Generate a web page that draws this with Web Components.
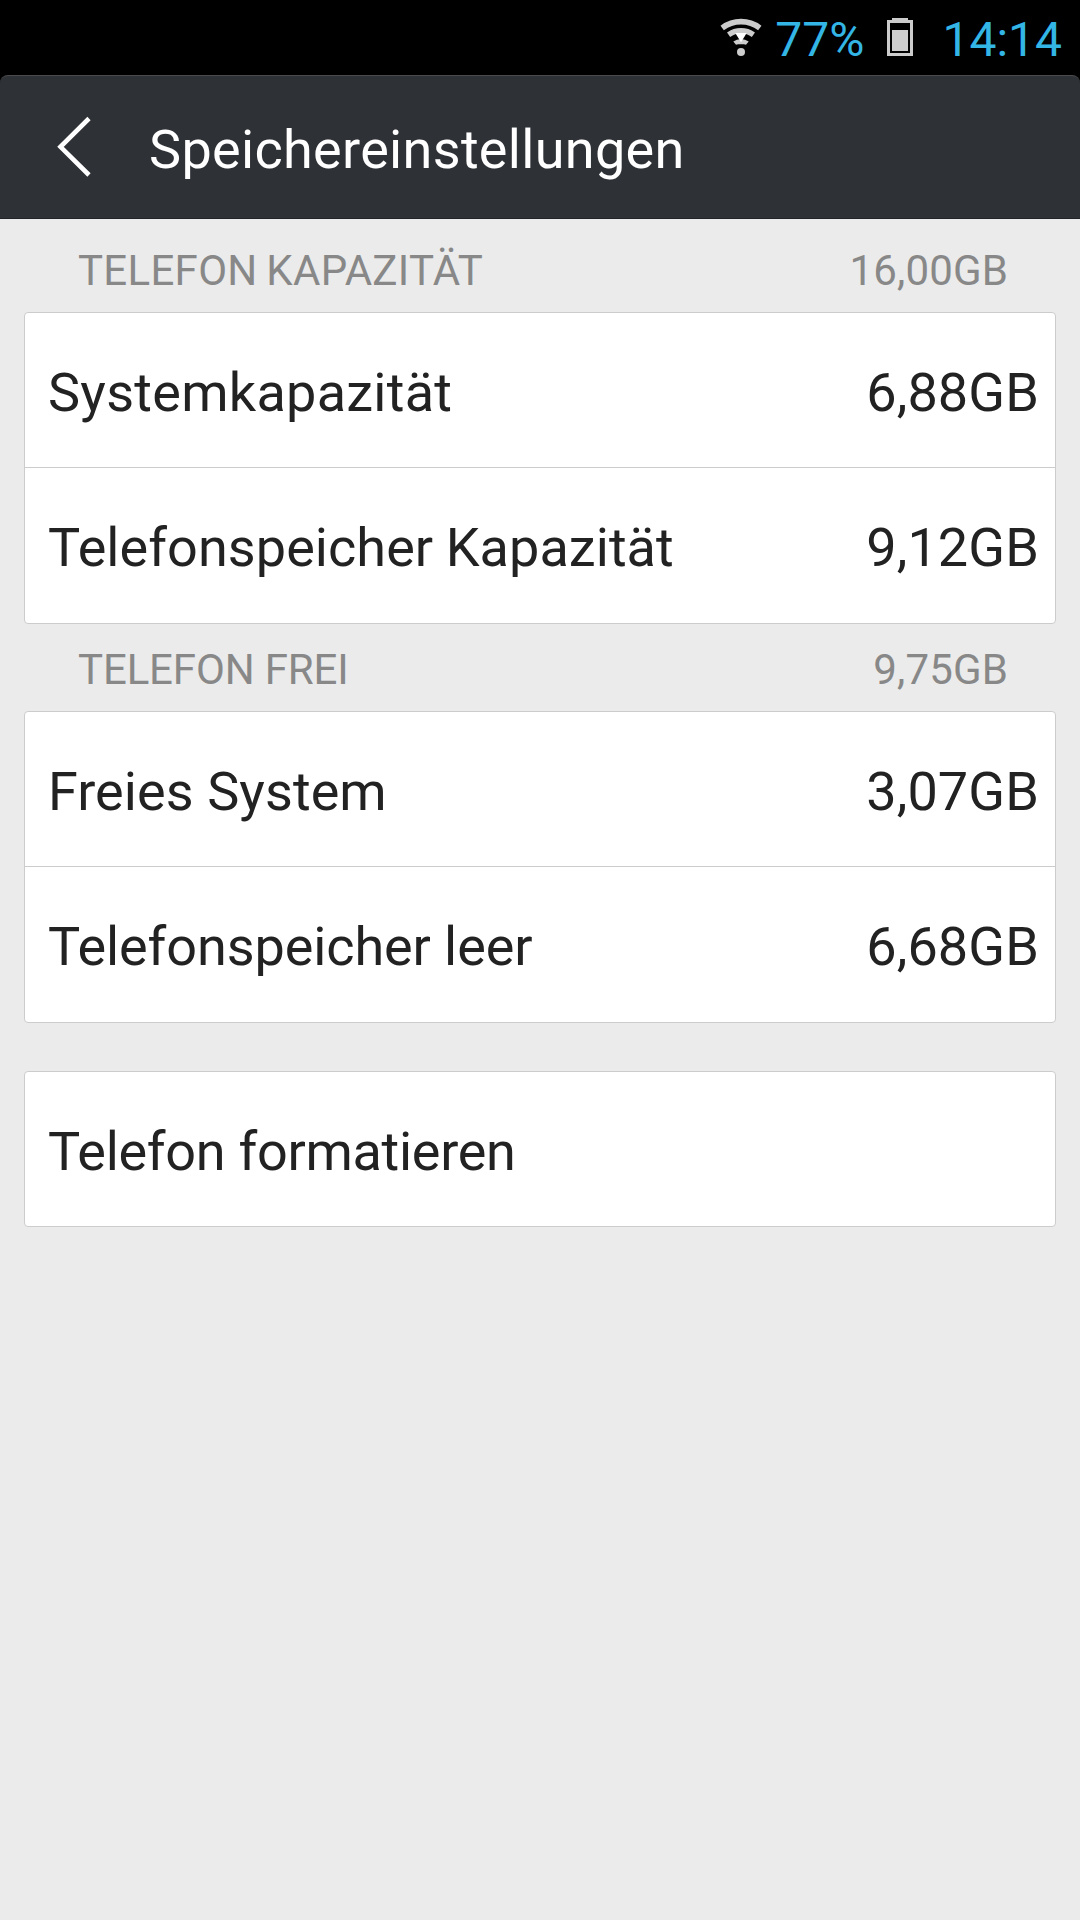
<!DOCTYPE html>
<html lang="de">
<head>
<meta charset="utf-8">
<title>Speichereinstellungen</title>
<style>
  body {
    margin: 0;
    background: #ebebeb;
    font-family: Roboto, "Noto Sans", sans-serif;
    color: #222;
  }
</style>
</head>
<body>
<storage-screen></storage-screen>

<script>
class StatusBar extends HTMLElement {
  constructor() {
    super();
    this.attachShadow({ mode: 'open' });
    this.shadowRoot.innerHTML = `
      <style>
        :host {
          display: flex;
          justify-content: flex-end;
          height: 75px;
          box-sizing: border-box;
          padding: 12px 18px 0 0;
          background: #000;
          color: #33b5e5;
          font-size: 48px;
          line-height: 56px;
        }
        svg { display: block; flex: none; margin-top: 4px; }
        .wifi { margin-right: 12px; }
        .battery { margin: 4px 29px 0 23px; }
      </style>
      <svg class="wifi" width="44" height="42" viewBox="0 0 44 42" fill="none" stroke="#ccc">
        <path d="M3.2 11.9A31.3 31.3 0 0 1 40.8 11.9" stroke-width="5.6"/>
        <path d="M9.6 18.7A21.3 21.3 0 0 1 34.4 18.7" stroke-width="5.4"/>
        <path d="M14.3 25.5A13 13 0 0 1 29.7 25.5L27 28.8L25 28.2H19L17 28.8Z" fill="#ccc" stroke="none"/>
        <circle cx="22" cy="36" r="4" fill="#ccc" stroke="none"/>
        <path d="M16.3 17H27.7L22 26.3Z" fill="#fff" stroke="none"/>
      </svg>
      <span><slot name="level"></slot></span>
      <svg class="battery" width="26" height="40" viewBox="0 0 26 40">
        <path d="M5 2H21V5H5Z" fill="#ccc"/>
        <rect x="1.5" y="5.5" width="23" height="33" fill="none" stroke="#ccc" stroke-width="3"/>
        <path d="M5 14H21V35H5Z" fill="#ccc"/>
      </svg>
      <span><slot name="time"></slot></span>
    `;
  }
}

class TitleBar extends HTMLElement {
  constructor() {
    super();
    this.attachShadow({ mode: 'open' });
    this.shadowRoot.innerHTML = `
      <style>
        :host { display: block; background: #000; }
        header {
          display: flex;
          align-items: center;
          height: 144px;
          box-sizing: border-box;
          padding-left: 54px;
          background: #2e3136;
          border-top: 1px solid #4b4b4d;
          border-bottom: 1px solid #222528;
          border-radius: 8px 8px 0 0;
        }
        svg { display: block; margin-right: 55px; }
        h1 {
          margin: 0;
          padding-top: 5px;
          color: #fff;
          font-size: 54px;
          font-weight: 400;
          line-height: 64px;
          letter-spacing: 0.32px;
        }
      </style>
      <header>
        <svg width="40" height="64" viewBox="0 0 40 64" fill="none" stroke="#fff" stroke-width="4.6">
          <path d="M35 3.5L6.5 31.8L35 60"/>
        </svg>
        <h1><slot></slot></h1>
      </header>
    `;
  }
}

// label + total above a card
class SectionHeader extends HTMLElement {
  constructor() {
    super();
    this.attachShadow({ mode: 'open' });
    this.shadowRoot.innerHTML = `
      <style>
        :host {
          display: flex;
          justify-content: space-between;
          align-items: flex-end;
          height: var(--section-height, 87px);
          box-sizing: border-box;
          padding: 0 48px 16px 54px;
          color: #888;
          font-size: 42px;
          line-height: 50px;
        }
        .label {
          letter-spacing: var(--tracking, 0);
          word-spacing: var(--word-gap, 0);
        }
        .value { letter-spacing: 0.15px; }
      </style>
      <span class="label"><slot></slot></span>
      <span class="value"><slot name="value"></slot></span>
    `;
  }
}

class SettingsCard extends HTMLElement {
  constructor() {
    super();
    this.attachShadow({ mode: 'open' });
    this.shadowRoot.innerHTML = `
      <style>
        :host {
          display: block;
          box-sizing: border-box;
          background: #fff;
          border: 1px solid #ccc;
          border-radius: 4px;
        }
        ::slotted(settings-row:not(:first-child)) {
          --row-height: 156px;
          border-top: 1px solid #ccc;
        }
      </style>
      <slot></slot>
    `;
  }
}

class SettingsRow extends HTMLElement {
  constructor() {
    super();
    this.attachShadow({ mode: 'open' });
    this.shadowRoot.innerHTML = `
      <style>
        :host {
          display: flex;
          justify-content: space-between;
          align-items: center;
          height: var(--row-height, 154px);
          box-sizing: border-box;
          padding: 5px 16px 0 23px;
          font-size: 54px;
          line-height: 64px;
        }
        .label {
          letter-spacing: var(--tracking, 0);
          word-spacing: var(--word-gap, 0);
        }
        .value { letter-spacing: 0.12px; }
      </style>
      <span class="label"><slot></slot></span>
      <span class="value"><slot name="value"></slot></span>
    `;
  }
}

class StorageScreen extends HTMLElement {
  constructor() {
    super();
    this.attachShadow({ mode: 'open' });
    this.shadowRoot.innerHTML = `
      <style>
        :host { display: block; }
        main { display: flex; flex-direction: column; padding: 0 24px; }
        .first { --section-height: 93px; }
        .format { margin-top: 48px; }
      </style>
      <status-bar>
        <span slot="level">77%</span>
        <span slot="time">14:14</span>
      </status-bar>
      <title-bar>Speichereinstellungen</title-bar>
      <main>
        <section-header class="first" style="--tracking: 0.3px; --word-gap: -2px">TELEFON KAPAZITÄT<span slot="value">16,00GB</span></section-header>
        <settings-card>
          <settings-row style="--tracking: 0.27px">Systemkapazität<span slot="value">6,88GB</span></settings-row>
          <settings-row style="--tracking: 0.06px; --word-gap: -1px">Telefonspeicher Kapazität<span slot="value">9,12GB</span></settings-row>
        </settings-card>
        <section-header style="--tracking: -0.15px">TELEFON FREI<span slot="value">9,75GB</span></section-header>
        <settings-card>
          <settings-row style="--tracking: 0.08px">Freies System<span slot="value">3,07GB</span></settings-row>
          <settings-row style="--tracking: -0.1px">Telefonspeicher leer<span slot="value">6,68GB</span></settings-row>
        </settings-card>
        <settings-card class="format">
          <settings-row style="--tracking: -0.29px">Telefon formatieren</settings-row>
        </settings-card>
      </main>
    `;
  }
}

customElements.define('status-bar', StatusBar);
customElements.define('title-bar', TitleBar);
customElements.define('section-header', SectionHeader);
customElements.define('settings-card', SettingsCard);
customElements.define('settings-row', SettingsRow);
customElements.define('storage-screen', StorageScreen);
</script>
</body>
</html>
